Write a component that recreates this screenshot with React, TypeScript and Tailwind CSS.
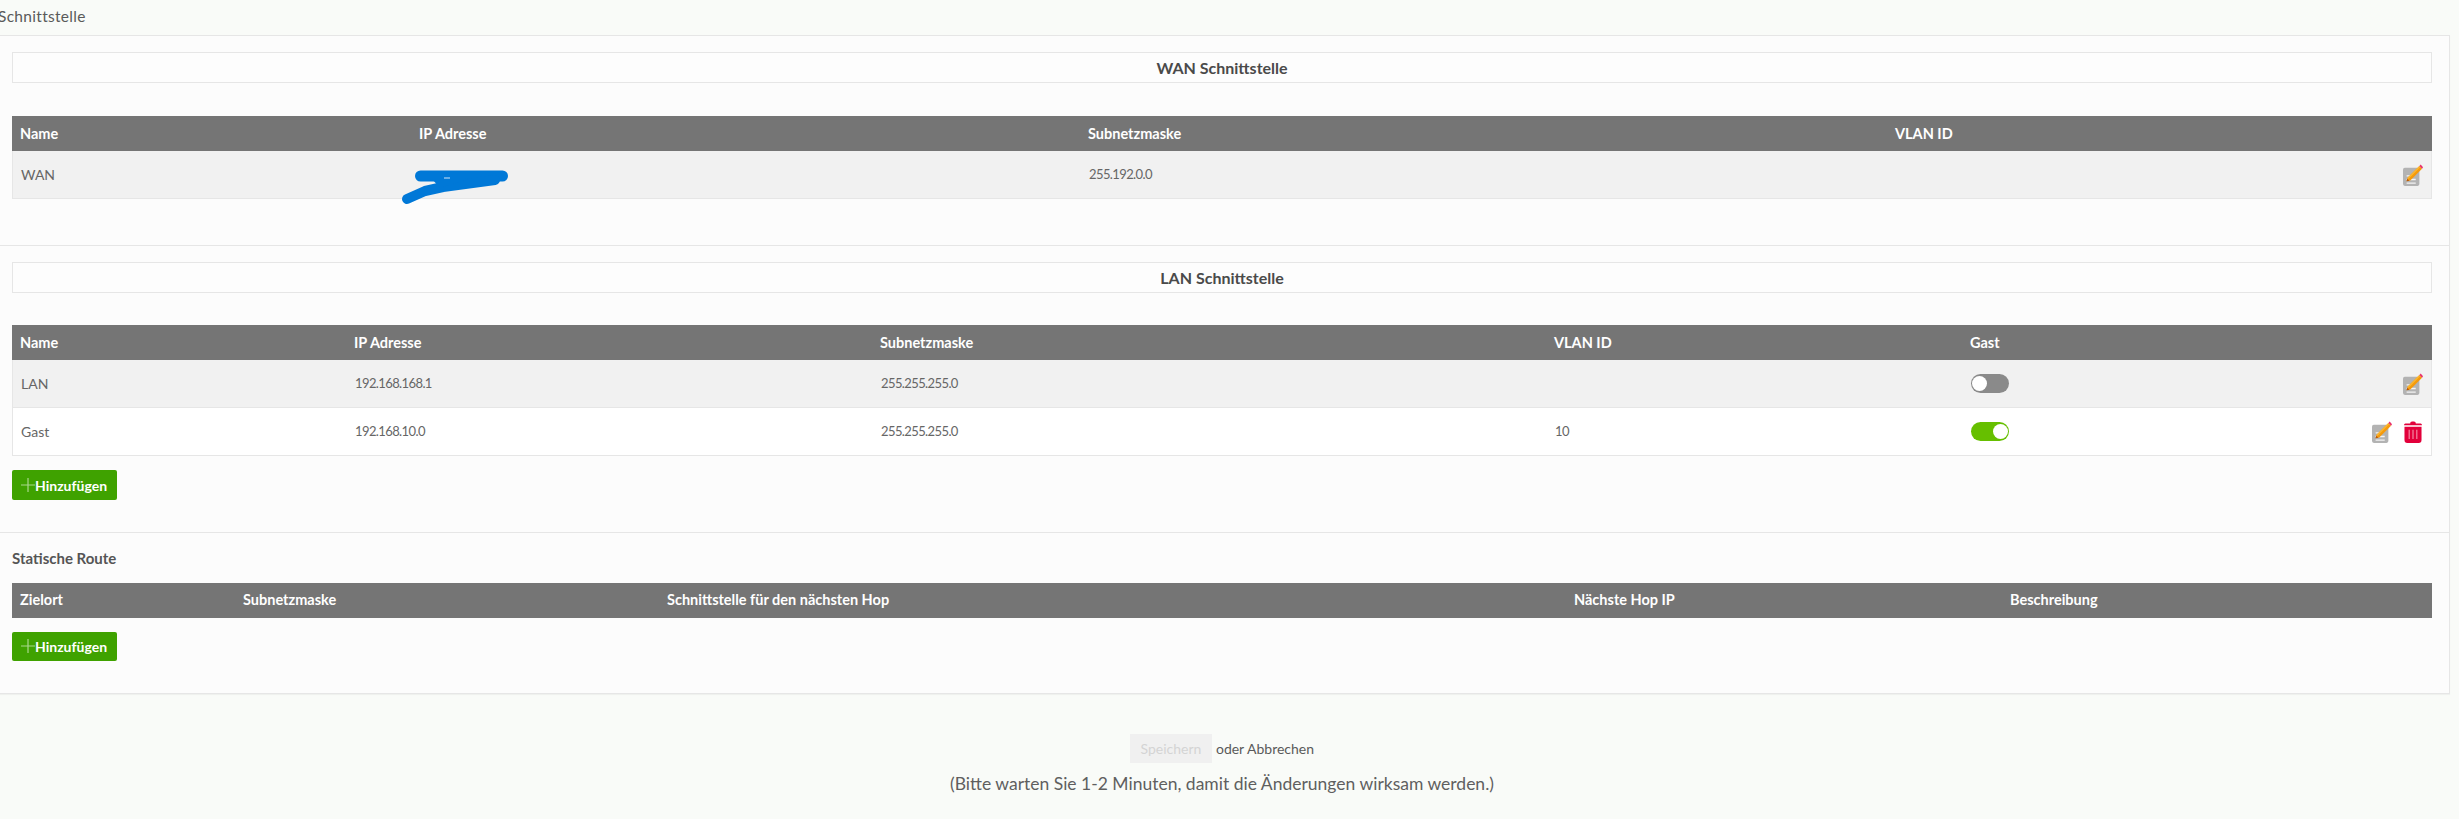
import { ReactNode } from "react";

const EditIcon = () => (
  <svg width="20" height="22" viewBox="0 0 22 24" className="shrink-0">
    <rect x="0" y="4" width="18" height="20" rx="2" fill="#b3b3b3" />
    <path d="M4 13h5M4 17h10M4 21h10" stroke="#f4f4f4" strokeWidth="1.5" />
    <path d="M5 15 L18 2 L21 5 L8 18 L4 19 Z" fill="#f59a0c" />
    <path d="M5 15 L18 2 L19.2 3.2 L6 16.5 Z" fill="#fbb62f" />
    <path d="M4.5 16 L4 19 L7 18.2 Z" fill="#b8560a" />
    <path d="M18 2 L19.5 0.5 L22 3.5 L21 5 Z" fill="#e8306a" />
  </svg>
);

const TrashIcon = () => (
  <svg width="18" height="22" viewBox="0 0 19 23" className="shrink-0">
    <path d="M6.5 2.5 Q6.5 0.5 8.5 0.5 H10.5 Q12.5 0.5 12.5 2.5 H17.5 Q19 2.5 19 4.5 H0 Q0 2.5 1.5 2.5 Z" fill="#e2003b" />
    <path d="M0.5 6 H18.5 V20 Q18.5 23 15.5 23 H3.5 Q0.5 23 0.5 20 Z" fill="#e2003b" />
    <path d="M5.5 9v10M9.5 9v10M13.5 9v10" stroke="#f27a98" strokeWidth="1.4" />
  </svg>
);

const Toggle = ({ on }: { on: boolean }) => (
  <div
    className={
      on
        ? "flex h-[19px] w-[38px] items-center justify-end rounded-full bg-[#66bf00] pr-px"
        : "flex h-[19px] w-[38px] items-center justify-start rounded-full bg-[#8a8a8a] pl-px"
    }
  >
    <div className="size-[15px] rounded-full bg-white" />
  </div>
);

const AddButton = ({ className }: { className: string }) => (
  <button className={`flex w-[105px] items-center rounded-[2px] bg-[#3fa200] pl-[9px] text-[14px] font-bold text-white ${className}`}>
    <svg width="14" height="14" viewBox="0 0 14 14" className="shrink-0">
      <path d="M0 7h14M7 0v14" stroke="#a9d88c" strokeWidth="1.2" />
    </svg>
    <span>Hinzufügen</span>
  </button>
);

const SectionTitle = ({ children }: { children: ReactNode }) => (
  <div className="flex h-[31px] items-center justify-center border border-[#e6e6e6] bg-[#fdfdfd] text-[16px] font-bold text-[#4a4a4a]">
    {children}
  </div>
);

const HeaderRow = ({ cols, labels }: { cols: string; labels: string[] }) => (
  <div className={`grid h-[35px] items-center bg-[#757575] pl-2 text-[14.5px] font-bold text-white ${cols}`}>
    {labels.map((label, i) => (
      <span key={i}>{label}</span>
    ))}
  </div>
);

const Num = ({ children }: { children?: ReactNode }) => (
  <span className="text-[13px] tracking-[-0.6px]">{children}</span>
);

const wanCols = "grid-cols-[399px_669px_807px_1fr]";
const lanCols = "grid-cols-[334px_526px_674px_416px_1fr_60px]";
const routeCols = "grid-cols-[223px_424px_907px_436px_1fr]";

const App = () => {
  return (
    <div className="min-h-[819px] overflow-hidden bg-[#f9fbf8] text-[14px] text-[#666666] [font-family:Lato,'Liberation_Sans',sans-serif]">
      <div className="flex h-[35px] items-center pb-px -ml-0.5 text-[15.5px] tracking-[0.3px] text-[#5a5a5a]">
        Schnittstelle
      </div>

      <div className="-ml-px w-[2451px] border border-[#e6e6e6] bg-[#fcfcfc] shadow-[0_1px_1px_rgba(0,0,0,0.04)]">
        <section className="h-[210px] border-b border-[#e6e6e6] pl-3 pr-[17px] pt-4">
          <SectionTitle>WAN Schnittstelle</SectionTitle>
          <div className="mt-[33px]">
            <HeaderRow cols={wanCols} labels={["Name", "IP Adresse", "Subnetzmaske", "VLAN ID"]} />
            <div className={`relative grid h-[48px] items-center border border-t-0 border-[#e6e6e6] bg-[#f1f1f1] pl-2 ${wanCols}`}>
              <span>WAN</span>
              <span />
              <Num>255.192.0.0</Num>
              <span className="flex justify-end pr-2">
                <EditIcon />
              </span>
              <svg width="120" height="40" viewBox="0 0 120 40" className="absolute left-[387px] top-[16px] overflow-visible">
                <path d="M20.5 9 H102.5" stroke="#0078d7" strokeWidth="11" strokeLinecap="round" />
                <path d="M95 13 L43 20 L25 24 L7 32" stroke="#0078d7" strokeWidth="10" strokeLinecap="round" strokeLinejoin="round" fill="none" />
                <path d="M32 12 L70 12 L40 21 Z" fill="#0078d7" />
                <path d="M44 11h6" stroke="#cfe4f7" strokeWidth="1" />
              </svg>
            </div>
          </div>
        </section>

        <section className="h-[287px] border-b border-[#e6e6e6] pl-3 pr-[17px] pt-4">
          <SectionTitle>LAN Schnittstelle</SectionTitle>
          <div className="mt-8">
            <HeaderRow cols={lanCols} labels={["Name", "IP Adresse", "Subnetzmaske", "VLAN ID", "Gast", ""]} />
            <div className={`grid h-[48px] items-center border border-t-0 border-[#e6e6e6] bg-[#f1f1f1] pl-2 ${lanCols}`}>
              <span>LAN</span>
              <Num>192.168.168.1</Num>
              <Num>255.255.255.0</Num>
              <span />
              <Toggle on={false} />
              <span className="flex justify-end pr-2">
                <EditIcon />
              </span>
            </div>
            <div className={`grid h-[48px] items-center border border-t-0 border-[#e6e6e6] bg-white pl-2 ${lanCols}`}>
              <span>Gast</span>
              <Num>192.168.10.0</Num>
              <Num>255.255.255.0</Num>
              <Num>10</Num>
              <Toggle on={true} />
              <span className="relative flex justify-end pr-[9px]">
                <span className="absolute right-[39px] top-0">
                  <EditIcon />
                </span>
                <TrashIcon />
              </span>
            </div>
          </div>
          <AddButton className="mt-[14px] h-[30px]" />
        </section>

        <section className="h-[160px] pl-3 pr-[17px] pt-[14px]">
          <h3 className="text-[15px] font-bold text-[#555555]">Statische Route</h3>
          <div className="mt-[13px]">
            <HeaderRow cols={routeCols} labels={["Zielort", "Subnetzmaske", "Schnittstelle für den nächsten Hop", "Nächste Hop IP", "Beschreibung"]} />
          </div>
          <AddButton className="mt-[14px] h-[29px]" />
        </section>
      </div>

      <div className="mt-[40px] flex w-[2444px] flex-col items-center">
        <div className="flex items-center gap-1 text-[14px] text-[#5a5a5a]">
          <button className="h-[29px] w-[82px] bg-[#f0f0f0] text-[#d4d4d4]">Speichern</button>
          <span>oder Abbrechen</span>
        </div>
        <p className="mt-[8px] text-[17.5px] text-[#5f5f5f]">(Bitte warten Sie 1-2 Minuten, damit die Änderungen wirksam werden.)</p>
      </div>
    </div>
  );
};

export default App;
